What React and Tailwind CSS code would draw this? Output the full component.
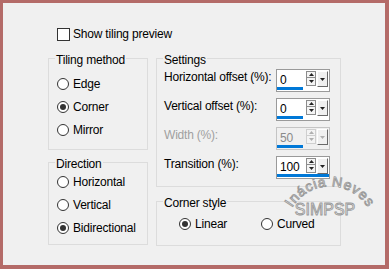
import React from 'react';

const txt = 'text-[12px] leading-[16px] tracking-[-0.2px]';

const Radio = ({ label, checked }) => (
  <div className="flex items-center h-[23px]">
    <span className="w-[12px] h-[12px] rounded-full border border-[#333] bg-white flex items-center justify-center shrink-0">
      {checked && <span className="w-[6px] h-[6px] rounded-full bg-[#333]" />}
    </span>
    <span className={`ml-[4px] ${txt} text-black`}>{label}</span>
  </div>
);

// group box: the title sits on the top border line
const Group = ({ title, className, bodyClass, children }) => (
  <div className={`border border-[#dcdcdc] flex flex-col ${className}`}>
    <span className={`-mt-[7px] ml-[6px] self-start px-[1px] bg-[#f0f0f0] ${txt} text-black`}>{title}</span>
    <div className={bodyClass}>{children}</div>
  </div>
);

const Tri = ({ up, color }) => (
  <svg width="5" height="3" viewBox="0 0 5 3" className="block">
    <path d={up ? 'M0 3L2.5 0L5 3Z' : 'M0 0L5 0L2.5 3Z'} fill={color} />
  </svg>
);

const SpinBox = ({ value, bar = 26, disabled }) => {
  const arrow = disabled ? '#b0b0b0' : '#222';
  const edge = disabled ? 'border-[#cfcfcf]' : 'border-[#8c8c8c]';
  return (
    <div className={`relative w-[54px] h-[23px] border ${disabled ? 'border-[#c4c4c4] bg-[#f0f0f0]' : 'border-[#9a9a9a] bg-white'} flex`}>
      <span className={`w-[29px] pl-[3px] pt-[2px] ${txt} ${disabled ? 'text-[#8a8a8a]' : 'text-black'}`}>{value}</span>
      <div className="mt-[1px] w-[10px] h-[15px] flex flex-col">
        <div className={`h-[7px] border ${edge} bg-[#f4f4f4] flex items-center justify-center`}>
          <Tri up color={arrow} />
        </div>
        <div className={`h-[8px] border border-t-0 ${edge} bg-[#f4f4f4] flex items-center justify-center`}>
          <Tri color={arrow} />
        </div>
      </div>
      <div className="mt-[1px] ml-[1px] w-[11px] h-[16px] bg-[#f0f0f0] border border-l-white border-t-white border-r-[#696969] border-b-[#696969] flex items-center justify-center">
        <Tri color={arrow} />
      </div>
      <div className="absolute left-0 bottom-[1px] h-[3px] bg-[#0078d7]" style={{ width: bar }} />
    </div>
  );
};

const Row = ({ label, value, bar, disabled }) => (
  <div className="flex items-start h-[23px]">
    <span className={`w-[112px] whitespace-nowrap ${txt} ${disabled ? 'text-[#a0a0a0]' : 'text-black'}`}>{label}</span>
    <SpinBox value={value} bar={bar} disabled={disabled} />
  </div>
);

export default function App() {
  return (
    <div className="relative w-[389px] h-[269px] font-['Liberation_Sans',Arial,sans-serif]">
      <div className="w-full h-full bg-[#f0f0f0] border-l-[3px] border-t-[3px] border-r-[4px] border-b-[4px] border-[#b46b68] pt-[23px] pl-[45px]">
        <div className="ml-[9px] h-[16px] flex items-center">
          <span className="w-[13px] h-[13px] border border-[#333] bg-white" />
          <span className={`ml-[3px] ${txt} text-black`}>Show tiling preview</span>
        </div>

        <div className="mt-[16px] flex gap-[8px]">
          <div className="w-[100px] flex flex-col">
            <Group title="Tiling method" className="h-[92px]" bodyClass="pl-[8px] pt-[4px]">
              <Radio label="Edge" />
              <Radio label="Corner" checked />
              <Radio label="Mirror" />
            </Group>
            <Group title="Direction" className="mt-[12px] h-[83px]" bodyClass="pl-[8px] -mt-[2px]">
              <Radio label="Horizontal" />
              <Radio label="Vertical" />
              <Radio label="Bidirectional" checked />
            </Group>
          </div>

          <div className="w-[185px] flex flex-col">
            <Group title="Settings" className="h-[129px]" bodyClass="pl-[7px] pt-[1px] flex flex-col gap-[6px]">
              <Row label="Horizontal offset (%):" value="0" />
              <Row label="Vertical offset (%):" value="0" />
              <Row label="Width (%):" value="50" disabled />
              <Row label="Transition (%):" value="100" bar={52} />
            </Group>
            <Group title="Corner style" className="mt-[14px] h-[45px]" bodyClass="pl-[22px] pt-[1px] flex">
              <div className="w-[82px]"><Radio label="Linear" checked /></div>
              <Radio label="Curved" />
            </Group>
          </div>
        </div>
      </div>

      {/* watermark */}
      <svg className="absolute top-0 left-0 pointer-events-none" width="389" height="269" viewBox="0 0 389 269">
        <defs>
          <path id="wm-arc" d="M290 212 A44 44 0 0 1 370 212" fill="none" />
        </defs>
        <text fontFamily="Liberation Sans, Arial, sans-serif" fontSize="14" fill="#f7f7f7" stroke="#9a9a9a" strokeWidth="0.9" letterSpacing="0.8">
          <textPath href="#wm-arc" startOffset="50%" textAnchor="middle">Inácia Neves</textPath>
        </text>
        <text x="325" y="215" textAnchor="middle" fontFamily="Liberation Sans, Arial, sans-serif" fontSize="16" fill="#f7f7f7" stroke="#9a9a9a" strokeWidth="0.9">SIMPSP</text>
      </svg>
    </div>
  );
}
